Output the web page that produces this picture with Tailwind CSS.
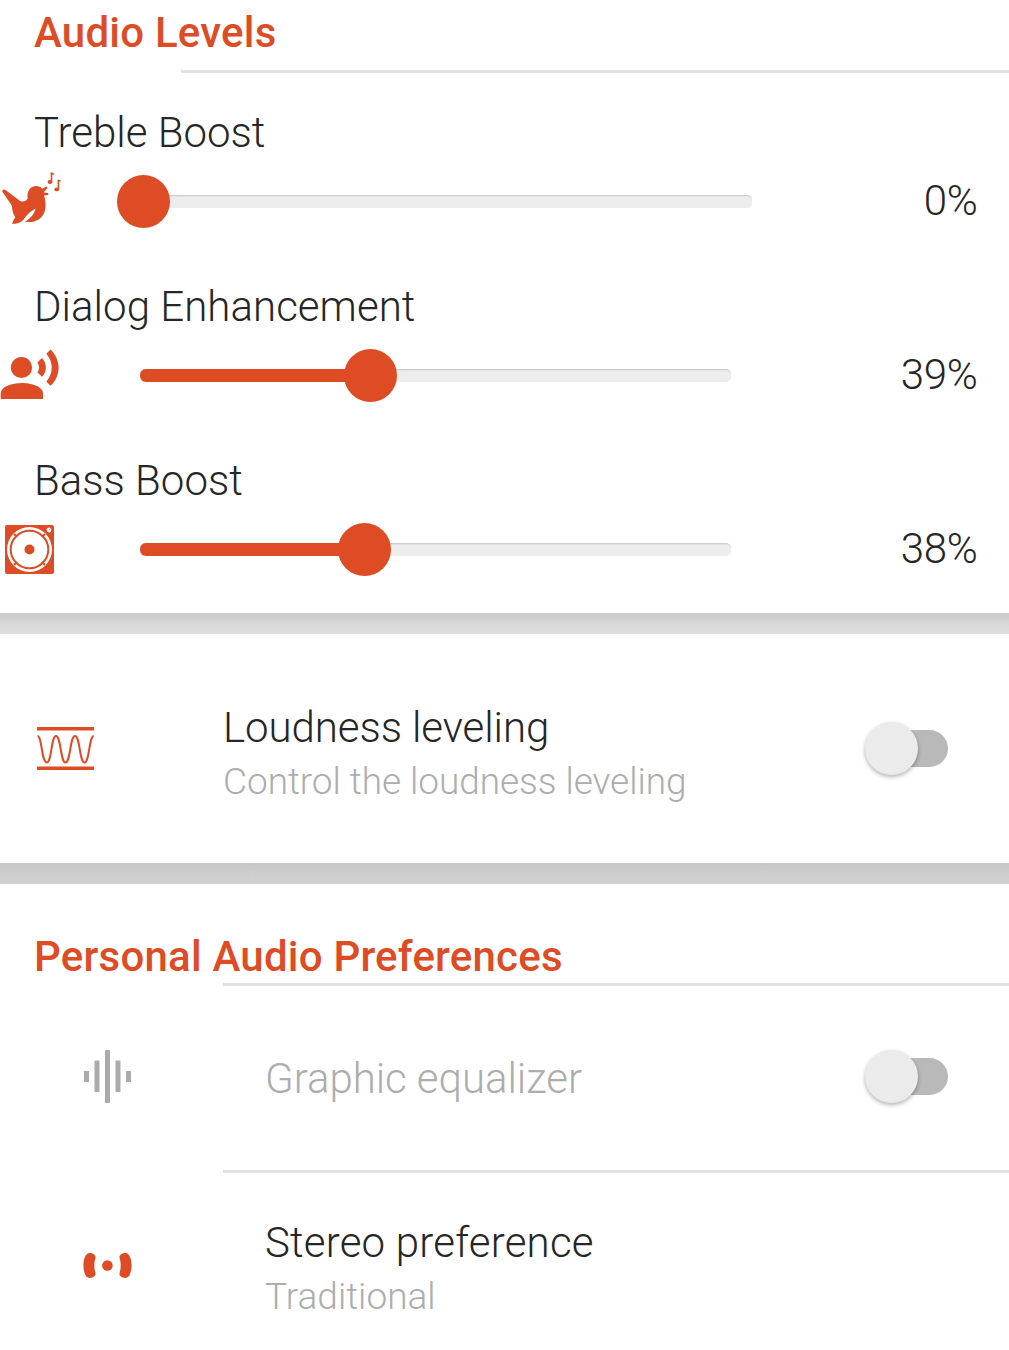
<!DOCTYPE html>
<html lang="en">
<head>
<meta charset="utf-8">
<title>Audio settings</title>
<script src="https://cdn.jsdelivr.net/npm/@tailwindcss/browser@4"></script>
</head>
<body class="w-[1009px] h-[1350px] overflow-hidden bg-[#d1d1d1] font-[Roboto,sans-serif] font-light text-[42px] leading-[50px] text-[#262626]">
  <section class="h-[613px] bg-white pt-2">
    <h2 class="pl-[34px] font-medium tracking-[0.22px] text-[#dd4c25]">Audio Levels</h2>
    <div class="mt-3 ml-[181px] h-[3px] bg-[#e2e2e2]"></div>

    <div class="mt-[35px] h-[174px]">
      <h3 class="pl-[34px]">Treble Boost</h3>
      <div class="mt-[17px] flex h-[53px] items-center">
        <svg class="h-[65px] w-[70px] -mt-[8px] shrink-0" viewBox="0 0 70 65" fill="#dd4c25">
          <path d="M2.2 26.5C2.5 24.4 4.3 24 5.800 25.200L20.500 36.200C23.500 37 26.600 35.600 27.600 33.400C27 27.600 29 23.400 32.500 21.800C36.200 20.200 40 21 42.200 23.800L46.600 21.600L47.400 23L43.600 27.600L48.200 28V30L44 30.400C45.600 34.800 46.400 41 44.500 47C41.800 54.500 34.500 58.200 24.800 56.800C30 53.500 34.300 49.500 35.600 43.400C31 45.700 27.500 49 23.600 54.500C20.500 58.500 15.800 58.800 12.200 58.900C12.600 56.200 14 54 15.300 52.200C12 47.800 12.500 43 11.800 40.500Z"/>
          <ellipse cx="50" cy="17" rx="2.4" ry="1.9"/><ellipse cx="56.700" cy="24.400" rx="2.400" ry="1.900"/>
          <path d="M51.500 17V8.200L54 9.300M58.400 24.500V15.500L60.600 16.100" fill="none" stroke="#dd4c25" stroke-width="1.6"/>
        </svg>
        <div class="relative ml-[70px] h-[13px] w-[612px] rounded-[5px] border-t border-[#cecece] bg-[#ededed] shadow-[inset_0_1px_0_#e2e2e2]">
          <div class="absolute -left-[23px] -top-[21px] size-[53px] rounded-full bg-[#dd4c25]"></div>
        </div>
        <span class="ml-auto pr-[31.5px] -mt-[1px] tracking-[-0.3px]">0%</span>
      </div>
    </div>

    <div class="h-[174px]">
      <h3 class="pl-[34px] tracking-[0.04px]">Dialog Enhancement</h3>
      <div class="mt-[17px] flex h-[53px] items-center">
        <svg class="h-[60px] w-[70px] -mt-[1px] shrink-0" viewBox="0 0 70 60" fill="#dd4c25">
          <circle cx="21.500" cy="22.500" r="10.600"/>
          <path d="M.7 54V48.500C.7 41.500 12 38 21.700 38S43 41.500 43 48.500V54Z"/>
          <path d="M42 13C47.200 18.600 47.200 26.600 42 31.800L37.400 27.400C39.600 24.200 39.600 20.600 37.400 17.400ZM50.600 4.400C61.300 15.200 61.300 30.500 50.600 40.800L46.300 36.600C53.600 28.300 53.600 16.700 46.300 8.700Z"/>
        </svg>
        <div class="relative ml-[70px] h-[13px] w-[591px] rounded-[5px] border-t border-[#cecece] bg-[#ededed] shadow-[inset_0_1px_0_#e2e2e2]">
          <div class="absolute left-0 -top-[1px] h-[13px] w-[230px] rounded-l-[6px] bg-[#dd4c25]"></div>
          <div class="absolute left-[204px] -top-[21px] size-[53px] rounded-full bg-[#dd4c25]"></div>
        </div>
        <span class="ml-auto pr-[31.5px] -mt-[1px] tracking-[-0.3px]">39%</span>
      </div>
    </div>

    <div>
      <h3 class="pl-[34px]">Bass Boost</h3>
      <div class="mt-[17px] flex h-[53px] items-center">
        <svg class="h-[60px] w-[70px] -mt-[3px] shrink-0" viewBox="0 0 70 60">
          <rect x="5" y="7" width="49" height="49" rx="2" fill="#dd4c25"/>
          <circle cx="29.500" cy="31.500" r="22.500" fill="#fff"/>
          <circle cx="29.500" cy="31.500" r="18.800" fill="none" stroke="#dd4c25" stroke-width="2"/>
          <path d="M14 16l3 3M45 16l-3 3M14 47l3-3M45 47l-3-3" stroke="#dd4c25" stroke-width="2"/>
          <circle cx="29.500" cy="31.500" r="5" fill="#dd4c25"/>
          <circle cx="49" cy="12" r="2.400" fill="#fff"/>
          <path d="M49 12l1.500-1.500" stroke="#dd4c25" stroke-width=".7"/>
        </svg>
        <div class="relative ml-[70px] h-[13px] w-[591px] rounded-[5px] border-t border-[#cecece] bg-[#ededed] shadow-[inset_0_1px_0_#e2e2e2]">
          <div class="absolute left-0 -top-[1px] h-[13px] w-[224px] rounded-l-[6px] bg-[#dd4c25]"></div>
          <div class="absolute left-[198px] -top-[21px] size-[53px] rounded-full bg-[#dd4c25]"></div>
        </div>
        <span class="ml-auto pr-[31.5px] -mt-[1px] tracking-[-0.3px]">38%</span>
      </div>
    </div>
  </section>

  <div class="h-[21px] bg-linear-to-b from-[#c7c7c7] via-[#d8d8d8] to-[#dfdfdf]"></div>

  <section class="flex h-[229px] items-center bg-white">
    <svg class="ml-[30px] -mt-[2px] h-[65px] w-[70px] shrink-0" viewBox="0 0 70 65" fill="none" stroke="#dd4c25">
      <path d="M7 13.700H64M7 53.300H64" stroke-width="3.600"/>
      <path d="M7.500 21C12 21 11.500 47.500 16.700 47.500S21 21 26 21S30.500 47.500 35.500 47.500S40 21 45 21S49.500 47.500 54.500 47.500S59 21 63.800 21" stroke-width="2"/>
    </svg>
    <div class="ml-[123px] mt-[12px]">
      <h3 class="tracking-[-0.08px]">Loudness leveling</h3>
      <p class="mt-[5px] text-[37px] leading-[48px] tracking-[-0.05px] text-[#adadad]">Control the loudness leveling</p>
    </div>
    <div class="relative ml-auto mr-[61px] h-[37px] w-[76px] rounded-full bg-[#b9b9b9]">
      <div class="absolute -left-[7px] -top-[8px] size-[53px] rounded-full bg-[#ebebeb] shadow-[0_2px_4px_rgba(0,0,0,0.3)]"></div>
    </div>
  </section>

  <div class="h-[21px] bg-linear-to-b from-[#c7c7c7] via-[#cecece] to-[#d1d1d1]"></div>

  <section class="h-[466px] bg-white pt-12">
    <h2 class="pl-[34px] font-medium tracking-[0.22px] text-[#dd4c25]">Personal Audio Preferences</h2>
    <div class="mt-[1px] ml-[223px] h-[3px] bg-[#e2e2e2]"></div>
    <div class="flex h-[184px] items-center">
      <svg class="ml-[75px] -mt-[6px] h-[70px] w-[65px] shrink-0" viewBox="0 0 65 70" fill="#ababab">
        <path d="M9 31h5v11H9zM19.500 20.500h5v31.500h-5zM30 10h5v53h-5zM40.500 20.500h5v31.500h-5zM51 31h5v11h-5z"/>
      </svg>
      <h3 class="ml-[125px] mt-[2px] tracking-[-0.05px] text-[#adadad]">Graphic equalizer</h3>
      <div class="relative ml-auto mr-[61px] -mt-[3px] h-[37px] w-[76px] rounded-full bg-[#b9b9b9]">
        <div class="absolute -left-[7px] -top-[8px] size-[53px] rounded-full bg-[#ebebeb] shadow-[0_2px_4px_rgba(0,0,0,0.3)]"></div>
      </div>
    </div>
    <div class="ml-[223px] h-[3px] bg-[#e2e2e2]"></div>
    <div class="flex h-[177px] items-start">
      <svg class="ml-[75px] mt-[67px] h-[50px] w-[65px] shrink-0" viewBox="0 0 65 50" fill="#dd4c25">
        <path d="M14.700 13C18.500 13 21.500 16 20.300 18.500C19 22.500 19 28.500 20.300 32.500C21.500 35.500 18.500 38 14.700 38C6.300 38 6.300 13 14.700 13ZM50.300 13C46.500 13 43.500 16 44.700 18.500C46 22.500 46 28.500 44.700 32.500C43.500 35.500 46.500 38 50.300 38C58.700 38 58.700 13 50.300 13Z"/>
        <circle cx="32.400" cy="25.500" r="5.300"/>
      </svg>
      <div class="ml-[125px] mt-[45px]">
        <h3 class="tracking-[0.2px]">Stereo preference</h3>
        <p class="mt-[5px] text-[37px] leading-[48px] text-[#adadad]">Traditional</p>
      </div>
    </div>
  </section>
</body>
</html>
